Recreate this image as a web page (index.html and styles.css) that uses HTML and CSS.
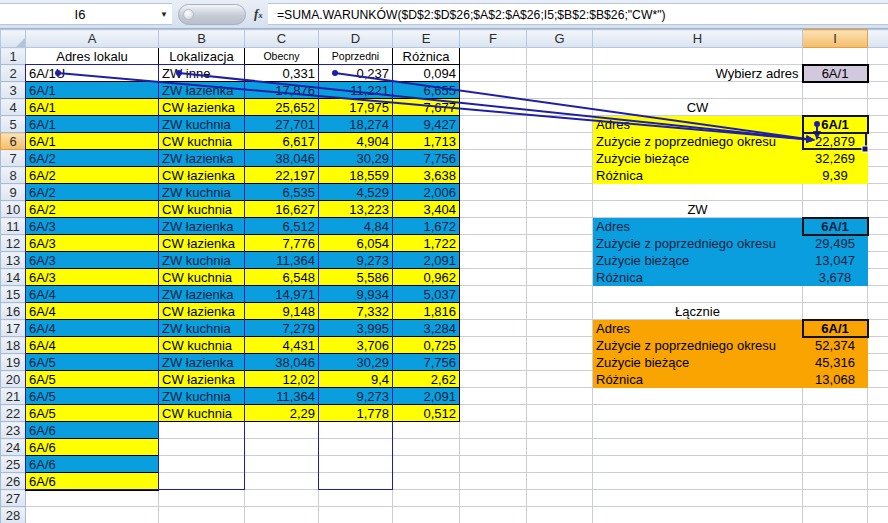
FILE: index.html
```html
<!DOCTYPE html>
<html lang="pl">
<head>
    <meta charset="UTF-8">
    <title>Zużycie wody</title>
    <link rel="stylesheet" href="styles.css">
</head>
<body>
    <div class="formula-bar">
        <div class="name-box"><span class="cell-ref">I6</span><span class="drop">&#9660;</span></div>
        <div class="fx-area"><span class="pill"><span class="knob"></span></span><span class="fx">f<i>x</i></span></div>
        <div class="formula">=SUMA.WARUNKÓW($D$2:$D$26;$A$2:$A$26;I5;$B$2:$B$26;"CW*")</div>
    </div>

    <table class="sheet">
        <colgroup>
            <col class="w-hdr"><col class="w-a"><col class="w-b"><col class="w-c"><col class="w-d"><col class="w-e">
            <col class="w-f"><col class="w-g"><col class="w-h"><col class="w-i"><col class="w-j">
        </colgroup>
        <thead>
            <tr>
                <th class="corner"><svg width="10" height="10" viewBox="0 0 10 10"><path d="M10 1 L10 10 L1 10 Z" fill="#b3c3d8"/></svg></th>
                <th>A</th><th>B</th><th>C</th><th>D</th><th>E</th><th>F</th><th>G</th><th>H</th><th class="on">I</th><th></th>
            </tr>
        </thead>
        <tbody>
            <tr><th>1</th><td class="b ctr">Adres lokalu</td><td class="b ctr">Lokalizacja</td><td class="b ctr sm">Obecny</td><td class="b ctr sm">Poprzedni</td><td class="b ctr">Różnica</td><td></td><td></td><td></td><td></td><td></td></tr>
            <tr><th>2</th><td class="b">6A/1U</td><td class="b">ZW inne</td><td class="b num">0,331</td><td class="b num">0,237</td><td class="b num">0,094</td><td></td><td></td><td class="num">Wybierz adres</td><td class="pick ctr">6A/1</td><td></td></tr>
            <tr><th>3</th><td class="b blue">6A/1</td><td class="b blue">ZW łazienka</td><td class="b blue num">17,876</td><td class="b blue num">11,221</td><td class="b blue num">6,655</td><td></td><td></td><td></td><td></td><td></td></tr>
            <tr><th>4</th><td class="b yel">6A/1</td><td class="b yel">CW łazienka</td><td class="b yel num">25,652</td><td class="b yel num">17,975</td><td class="b yel num">7,677</td><td></td><td></td><td class="ctr">CW</td><td></td><td></td></tr>
            <tr><th>5</th><td class="b blue">6A/1</td><td class="b blue">ZW kuchnia</td><td class="b blue num">27,701</td><td class="b blue num">18,274</td><td class="b blue num">9,427</td><td></td><td></td><td class="f-yel">Adres</td><td class="f-yel box ctr">6A/1</td><td></td></tr>
            <tr><th class="on">6</th><td class="b yel">6A/1</td><td class="b yel">CW kuchnia</td><td class="b yel num">6,617</td><td class="b yel num">4,904</td><td class="b yel num">1,713</td><td></td><td></td><td class="f-yel">Zużycie z poprzedniego okresu</td><td class="f-yel ctr">22,879</td><td></td></tr>
            <tr><th>7</th><td class="b blue">6A/2</td><td class="b blue">ZW łazienka</td><td class="b blue num">38,046</td><td class="b blue num">30,29</td><td class="b blue num">7,756</td><td></td><td></td><td class="f-yel">Zużycie bieżące</td><td class="f-yel ctr">32,269</td><td></td></tr>
            <tr><th>8</th><td class="b yel">6A/2</td><td class="b yel">CW łazienka</td><td class="b yel num">22,197</td><td class="b yel num">18,559</td><td class="b yel num">3,638</td><td></td><td></td><td class="f-yel">Różnica</td><td class="f-yel ctr">9,39</td><td></td></tr>
            <tr><th>9</th><td class="b blue">6A/2</td><td class="b blue">ZW kuchnia</td><td class="b blue num">6,535</td><td class="b blue num">4,529</td><td class="b blue num">2,006</td><td></td><td></td><td></td><td></td><td></td></tr>
            <tr><th>10</th><td class="b yel">6A/2</td><td class="b yel">CW kuchnia</td><td class="b yel num">16,627</td><td class="b yel num">13,223</td><td class="b yel num">3,404</td><td></td><td></td><td class="ctr">ZW</td><td></td><td></td></tr>
            <tr><th>11</th><td class="b blue">6A/3</td><td class="b blue">ZW łazienka</td><td class="b blue num">6,512</td><td class="b blue num">4,84</td><td class="b blue num">1,672</td><td></td><td></td><td class="f-blue">Adres</td><td class="f-blue box ctr">6A/1</td><td></td></tr>
            <tr><th>12</th><td class="b yel">6A/3</td><td class="b yel">CW łazienka</td><td class="b yel num">7,776</td><td class="b yel num">6,054</td><td class="b yel num">1,722</td><td></td><td></td><td class="f-blue">Zużycie z poprzedniego okresu</td><td class="f-blue ctr">29,495</td><td></td></tr>
            <tr><th>13</th><td class="b blue">6A/3</td><td class="b blue">ZW kuchnia</td><td class="b blue num">11,364</td><td class="b blue num">9,273</td><td class="b blue num">2,091</td><td></td><td></td><td class="f-blue">Zużycie bieżące</td><td class="f-blue ctr">13,047</td><td></td></tr>
            <tr><th>14</th><td class="b yel">6A/3</td><td class="b yel">CW kuchnia</td><td class="b yel num">6,548</td><td class="b yel num">5,586</td><td class="b yel num">0,962</td><td></td><td></td><td class="f-blue">Różnica</td><td class="f-blue ctr">3,678</td><td></td></tr>
            <tr><th>15</th><td class="b blue">6A/4</td><td class="b blue">ZW łazienka</td><td class="b blue num">14,971</td><td class="b blue num">9,934</td><td class="b blue num">5,037</td><td></td><td></td><td></td><td></td><td></td></tr>
            <tr><th>16</th><td class="b yel">6A/4</td><td class="b yel">CW łazienka</td><td class="b yel num">9,148</td><td class="b yel num">7,332</td><td class="b yel num">1,816</td><td></td><td></td><td class="ctr">Łącznie</td><td></td><td></td></tr>
            <tr><th>17</th><td class="b blue">6A/4</td><td class="b blue">ZW kuchnia</td><td class="b blue num">7,279</td><td class="b blue num">3,995</td><td class="b blue num">3,284</td><td></td><td></td><td class="f-org">Adres</td><td class="f-org box ctr">6A/1</td><td></td></tr>
            <tr><th>18</th><td class="b yel">6A/4</td><td class="b yel">CW kuchnia</td><td class="b yel num">4,431</td><td class="b yel num">3,706</td><td class="b yel num">0,725</td><td></td><td></td><td class="f-org">Zużycie z poprzedniego okresu</td><td class="f-org ctr">52,374</td><td></td></tr>
            <tr><th>19</th><td class="b blue">6A/5</td><td class="b blue">ZW łazienka</td><td class="b blue num">38,046</td><td class="b blue num">30,29</td><td class="b blue num">7,756</td><td></td><td></td><td class="f-org">Zużycie bieżące</td><td class="f-org ctr">45,316</td><td></td></tr>
            <tr><th>20</th><td class="b yel">6A/5</td><td class="b yel">CW łazienka</td><td class="b yel num">12,02</td><td class="b yel num">9,4</td><td class="b yel num">2,62</td><td></td><td></td><td class="f-org">Różnica</td><td class="f-org ctr">13,068</td><td></td></tr>
            <tr><th>21</th><td class="b blue">6A/5</td><td class="b blue">ZW kuchnia</td><td class="b blue num">11,364</td><td class="b blue num">9,273</td><td class="b blue num">2,091</td><td></td><td></td><td></td><td></td><td></td></tr>
            <tr><th>22</th><td class="b yel">6A/5</td><td class="b yel">CW kuchnia</td><td class="b yel num">2,29</td><td class="b yel num">1,778</td><td class="b yel num">0,512</td><td></td><td></td><td></td><td></td><td></td></tr>
            <tr><th>23</th><td class="b blue">6A/6</td><td></td><td></td><td></td><td></td><td></td><td></td><td></td><td></td><td></td></tr>
            <tr><th>24</th><td class="b yel">6A/6</td><td></td><td></td><td></td><td></td><td></td><td></td><td></td><td></td><td></td></tr>
            <tr><th>25</th><td class="b blue">6A/6</td><td></td><td></td><td></td><td></td><td></td><td></td><td></td><td></td><td></td></tr>
            <tr><th>26</th><td class="b yel last">6A/6</td><td></td><td></td><td></td><td></td><td></td><td></td><td></td><td></td><td></td></tr>
            <tr><th>27</th><td></td><td></td><td></td><td></td><td></td><td></td><td></td><td></td><td></td><td></td></tr>
            <tr><th>28</th><td></td><td></td><td></td><td></td><td></td><td></td><td></td><td></td><td></td><td></td></tr>
        </tbody>
    </table>

    <!-- precedent arrows drawn over the sheet -->
    <svg class="trace" width="888" height="523" viewBox="0 0 888 523">
        <defs>
            <marker id="head" markerUnits="userSpaceOnUse" markerWidth="9" markerHeight="8" refX="8" refY="4" orient="auto">
                <path d="M0 0 L9 4 L0 8 Z" fill="#1f1fa6"/>
            </marker>
        </defs>
        <g fill="none" stroke="#1f1fa6" stroke-width="1">
            <rect x="25.5" y="64.5" width="133" height="425"/>
            <rect x="158.5" y="64.5" width="86" height="425"/>
            <rect x="318.5" y="64.5" width="74" height="425"/>
        </g>
        <g stroke="#1f1fa6" stroke-width="2" marker-end="url(#head)">
            <line x1="58" y1="73" x2="814" y2="140"/>
            <line x1="179" y1="73" x2="814" y2="140"/>
            <line x1="335" y1="73" x2="814" y2="140"/>
            <line x1="817" y1="124" x2="817" y2="139"/>
        </g>
        <g fill="#1f1fa6">
            <circle cx="58" cy="73" r="3"/>
            <circle cx="179" cy="73" r="3"/>
            <circle cx="335" cy="73" r="3"/>
            <circle cx="817" cy="124" r="3"/>
        </g>
        <!-- active cell I6 -->
        <rect x="803" y="133" width="63" height="16" fill="none" stroke="#15155c" stroke-width="2"/>
        <rect x="862" y="146" width="6" height="6" fill="#15155c" stroke="#fff" stroke-width="1"/>
    </svg>
</body>
</html>
```

FILE: styles.css
```css
body {
    margin: 0;
    width: 888px;
    height: 523px;
    overflow: hidden;
    position: relative;
    background-color: #ffffff;
    font-family: "Liberation Sans", Arial, sans-serif;
    color: #000;
}

/* formula bar */
.formula-bar {
    display: flex;
    align-items: center;
    height: 28px;
    background: linear-gradient(#e9eff7, #d6e0ee);
    border-bottom: 1px solid #9fb2cc;
}
.name-box {
    display: flex;
    align-items: center;
    width: 172px;
    height: 22px;
    background-color: #fff;
    border-top: 1px solid #b9c7da;
    border-bottom: 1px solid #b9c7da;
    box-sizing: border-box;
}
.cell-ref {
    flex: 1;
    text-align: center;
    font-size: 13px;
}
.drop {
    font-size: 8px;
    width: 12px;
    color: #222;
}
.fx-area {
    display: flex;
    align-items: center;
    width: 96px;
    height: 22px;
    padding-left: 6px;
    box-sizing: border-box;
}
.pill {
    position: relative;
    width: 68px;
    height: 21px;
    border-radius: 11px;
    background: linear-gradient(#f3f5f8, #c6ccd6 55%, #b9c0cb);
    border: 1px solid #a7b0bd;
    box-sizing: border-box;
}
.knob {
    position: absolute;
    left: 4px;
    top: 4px;
    width: 11px;
    height: 11px;
    border-radius: 50%;
    background: radial-gradient(circle at 40% 35%, #ffffff, #c9d0da);
    border: 1px solid #b3bcc8;
    box-sizing: border-box;
}
.fx {
    margin-left: 8px;
    font-family: "Liberation Serif", "Times New Roman", serif;
    font-style: italic;
    font-weight: bold;
    font-size: 13px;
    color: #333;
}
.fx i {
    font-size: 9px;
}
.formula {
    flex: 1;
    height: 22px;
    line-height: 22px;
    background-color: #fff;
    border-top: 1px solid #b9c7da;
    border-bottom: 1px solid #b9c7da;
    box-sizing: border-box;
    padding-left: 9px;
    font-size: 12.2px;
    white-space: nowrap;
    overflow: hidden;
}

/* sheet grid */
.sheet {
    border-collapse: collapse;
    table-layout: fixed;
    width: 888px;
    font-size: 13px;
}
.w-hdr { width: 25px; }
.w-a { width: 133px; }
.w-b { width: 86px; }
.w-c { width: 74px; }
.w-d { width: 74px; }
.w-e { width: 67px; }
.w-f { width: 67px; }
.w-g { width: 66px; }
.w-h { width: 210px; }
.w-i { width: 65px; }
.w-j { width: 21px; }

.sheet tr {
    height: 17px;
}
.sheet thead tr {
    height: 18px;
}
.sheet td {
    border: 1px solid #cbced6;
    padding: 0 3px;
    line-height: 15px;
    white-space: nowrap;
    overflow: hidden;
    vertical-align: bottom;
}
.sheet th {
    padding: 0;
    font-weight: normal;
    font-size: 13px;
    line-height: 15px;
    color: #2b2b2b;
    background: linear-gradient(#eef3fa, #dce5f1);
    border: 1px solid #a9bcd4;
    text-align: center;
}
.sheet thead th {
    background: linear-gradient(#f3f6fb, #d9e3f0);
    border-color: #b8c8dc;
}
.sheet th.corner {
    text-align: right;
    vertical-align: bottom;
    line-height: 0;
}
.sheet th.on {
    background: linear-gradient(#fbe2b4, #f4bd69);
    border-color: #e2a04a;
}

.ctr { text-align: center; }
.num { text-align: right; }
.sheet td.sm { font-size: 10.5px; }

/* bordered data table */
.sheet td.b { border: 1px solid #000; }
.sheet td.last { border-bottom: 2px solid #000; }
.blue { background-color: #0b9ede; color: #0a2340; }
.yel { background-color: #ffff00; }

/* summary blocks on the right */
.sheet td.f-yel { background-color: #ffff00; border-color: #ffff00; }
.sheet td.f-blue { background-color: #0b9ede; border-color: #0b9ede; color: #0a2340; }
.sheet td.f-org { background-color: #f9a400; border-color: #f9a400; }
.sheet td.box {
    border: 2px solid #111;
    font-weight: bold;
}
.sheet td.pick {
    background-color: #d2c9de;
    border: 2px solid #000;
}

.trace {
    position: absolute;
    left: 0;
    top: 0;
    pointer-events: none;
}
```
